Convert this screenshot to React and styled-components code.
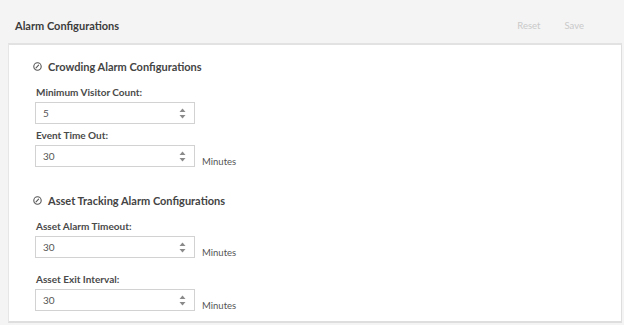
import React from "react";
import styled, { createGlobalStyle } from "styled-components";

const Global = createGlobalStyle`
  html, body { margin: 0; padding: 0; background: #f4f4f4; }
  body { font-family: Lato, "Open Sans", Arial, sans-serif; }
  * { box-sizing: border-box; }
`;

const Page = styled.div`
  width: 624px;
  height: 325px;
  background: #f4f4f4;
  overflow: hidden;
`;

const TopBar = styled.div`
  height: 43px;
  display: flex;
  align-items: center;
  padding: 7px 40px 0 15px;
`;

const Title = styled.h1`
  margin: 0;
  flex: 1;
  font-size: 11px;
  font-weight: 700;
  color: #3c3c3c;
`;

const Actions = styled.div`
  display: flex;
  gap: 24px;
`;

const TextButton = styled.button`
  border: 0;
  background: none;
  padding: 0;
  font-family: inherit;
  font-size: 9.5px;
  color: #c9c9c9;
  cursor: default;
`;

const Card = styled.div`
  margin: 0 2px 0 8px;
  height: 280px;
  background: #fff;
  border-top: 2px solid #e2e2e2;
  border-right: 1px solid #dedede;
  border-left: 1px solid #e6e6e6;
  border-bottom: 2px solid #dedede;
  padding: 14px 0 0 23px;
  display: flex;
  flex-direction: column;
`;

const Section = styled.section`
  display: flex;
  flex-direction: column;
  padding-bottom: ${p => (p.$last ? 0 : 12)}px;
`;

const SectionHeader = styled.h2`
  margin: 0 0 12px 1px;
  display: flex;
  align-items: center;
  gap: 6px;
  height: 14px;
  font-size: 11px;
  font-weight: 700;
  color: #444;
`;

const Field = styled.div`
  margin: 0 0 ${p => (p.$suffix ? 14 : 4)}px 3px;
`;

const Label = styled.label`
  display: block;
  height: 14px;
  line-height: 14px;
  margin: 0 0 3px 1px;
  font-size: 10px;
  font-weight: 700;
  color: #4a4a4a;
`;

const Row = styled.div`
  display: flex;
  align-items: flex-start;
  gap: 7px;
`;

const InputBox = styled.div`
  width: 160px;
  height: 22px;
  border: 1px solid #d2d2d2;
  background: #fff;
  display: flex;
  align-items: center;
  padding: 0 8px 0 7px;
  font-size: 10px;
  color: #555;
`;

const Value = styled.span`
  flex: 1;
`;

const Spinner = styled.svg`
  display: block;
`;

const Suffix = styled.span`
  margin-top: 11px;
  font-size: 9.5px;
  color: #555;
`;

const Arrows = () => (
  <Spinner width="7" height="11" viewBox="0 0 7 11">
    <path d="M3.5 0.5 L6.5 4 L0.5 4 Z" fill="#8a8a8a" />
    <path d="M0.5 7 L6.5 7 L3.5 10.5 Z" fill="#8a8a8a" />
  </Spinner>
);

const CircleIcon = () => (
  <svg width="9" height="9" viewBox="0 0 9 9">
    <circle cx="4.5" cy="4.5" r="3.7" fill="none" stroke="#555" strokeWidth="1.1" />
    <path d="M3 5.8 L5.6 3.2" stroke="#555" strokeWidth="1.1" strokeLinecap="round" />
  </svg>
);

const NumberField = ({ label, value, suffix }) => (
  <Field $suffix={!!suffix}>
    <Label>{label}</Label>
    <Row>
      <InputBox>
        <Value>{value}</Value>
        <Arrows />
      </InputBox>
      {suffix && <Suffix>{suffix}</Suffix>}
    </Row>
  </Field>
);

export default function App() {
  return (
    <Page>
      <Global />
      <TopBar>
        <Title>Alarm Configurations</Title>
        <Actions>
          <TextButton>Reset</TextButton>
          <TextButton>Save</TextButton>
        </Actions>
      </TopBar>
      <Card>
        <Section>
          <SectionHeader>
            <CircleIcon />
            Crowding Alarm Configurations
          </SectionHeader>
          <NumberField label="Minimum Visitor Count:" value="5" />
          <NumberField label="Event Time Out:" value="30" suffix="Minutes" />
        </Section>
        <Section $last>
          <SectionHeader>
            <CircleIcon />
            Asset Tracking Alarm Configurations
          </SectionHeader>
          <NumberField label="Asset Alarm Timeout:" value="30" suffix="Minutes" />
          <NumberField label="Asset Exit Interval:" value="30" suffix="Minutes" />
        </Section>
      </Card>
    </Page>
  );
}
